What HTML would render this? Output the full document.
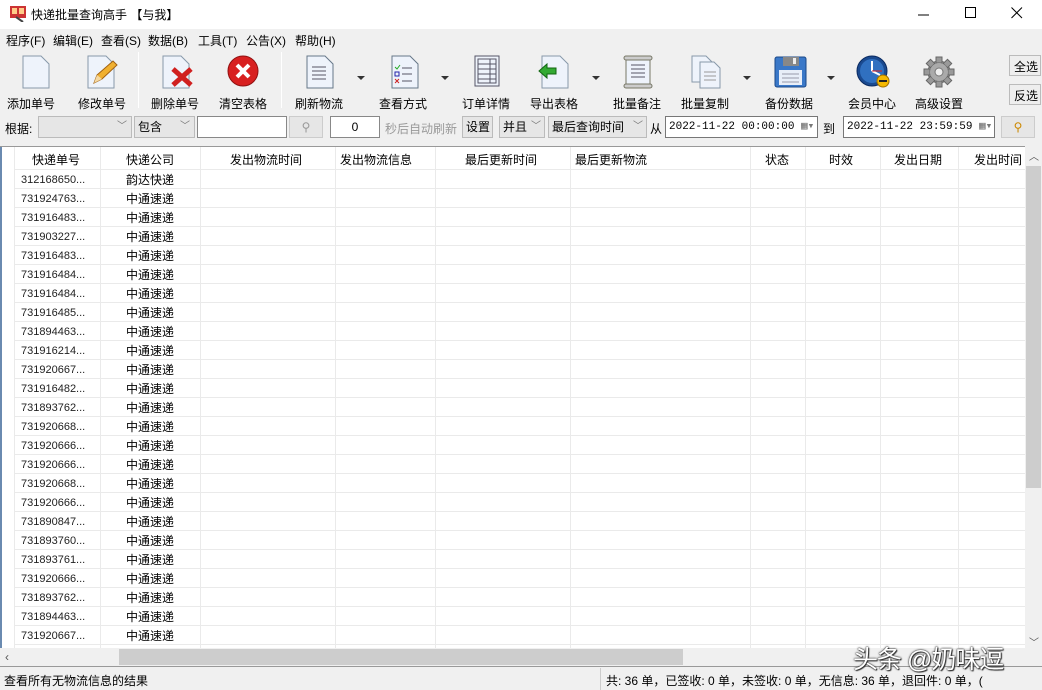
<!DOCTYPE html>
<html><head><meta charset="utf-8"><style>
*{box-sizing:border-box;margin:0;padding:0}
body{width:1042px;height:690px;overflow:hidden;background:#f0f0f0;font-family:"Liberation Sans","Noto Sans CJK SC",sans-serif;font-size:12px;color:#000;position:relative}
.abs{position:absolute}
.title{left:0;top:0;width:1042px;height:29px;background:#fff}
.menu{top:29px;left:0;width:1042px;height:20px;background:#f0f0f0}
.menu span{position:absolute;top:3px;font-size:12px}
.tb{position:absolute;top:95px;font-size:12px;white-space:nowrap}
.ic{position:absolute;top:55px}
.arrow{position:absolute;top:76px;width:0;height:0;border-left:4px solid transparent;border-right:4px solid transparent;border-top:4px solid #333}
.sep{position:absolute;top:52px;width:1px;height:56px;background:#bbb;border-right:1px solid #fff}
.box{position:absolute;top:116px;height:22px;border:1px solid #aaa;background:#fff;font-size:12px;line-height:20px;padding-left:3px}
.grid{left:0;top:146px;width:1025px;height:502px;background:#fff;border-top:1px solid #999}
.row{position:absolute;left:14px;width:1011px;height:19px;border-bottom:1px solid #eaeaea}
.vl{position:absolute;top:147px;height:501px;width:1px;background:#eaeaea}
.c1{position:absolute;left:7px;top:4px;font-size:11px;color:#222}
.c2{position:absolute;left:112px;top:1px;font-size:12px}
.hd{position:absolute;top:151px;font-size:12px}
</style></head><body>
<div class="abs title">
<svg class="abs" style="left:10px;top:6px" width="16" height="16"><rect x="0" y="0" width="16" height="12" fill="#c33"/><rect x="2" y="2" width="5" height="6" fill="#fc8"/><rect x="9" y="2" width="5" height="6" fill="#fc8"/><line x1="6" y1="11" x2="13" y2="16" stroke="#444" stroke-width="2"/></svg>
<span class="abs" style="left:31px;top:6px;font-size:12px">快递批量查询高手 【与我】</span>
<svg class="abs" style="left:918px;top:9px" width="12" height="12"><line x1="0" y1="6" x2="11" y2="6" stroke="#000"/></svg>
<svg class="abs" style="left:965px;top:7px" width="12" height="12"><rect x="0.5" y="0.5" width="10" height="10" fill="none" stroke="#000"/></svg>
<svg class="abs" style="left:1011px;top:7px" width="12" height="12"><path d="M0.5 0.5L11 11M11 0.5L0.5 11" stroke="#000"/></svg>
</div>
<div class="abs menu">
<span style="left:6px">程序(F)</span><span style="left:53px">编辑(E)</span><span style="left:101px">查看(S)</span><span style="left:148px">数据(B)</span><span style="left:198px">工具(T)</span><span style="left:246px">公告(X)</span><span style="left:295px">帮助(H)</span>
</div>
<svg class="ic" style="left:21px" width="30" height="34"><path d="M2 1h18l8 8v24H2z" fill="#eef3fb" stroke="#8899aa"/></svg>
<svg class="ic" style="left:86px" width="32" height="34"><path d="M2 1h18l8 8v24H2z" fill="#eef3fb" stroke="#8899aa"/><path d="M8 28l3-8 16-14 4 4-15 14z" fill="#f0b030" stroke="#a06010"/><path d="M8 28l3-8 5 4z" fill="#f5d8a0"/></svg>
<div class="sep" style="left:138px"></div>
<svg class="ic" style="left:161px" width="34" height="34"><path d="M2 1h18l8 8v24H2z" fill="#eef3fb" stroke="#8899aa"/><path d="M12 14l18 16M30 14L12 30" stroke="#d02020" stroke-width="5"/></svg>
<svg class="ic" style="left:227px" width="34" height="34"><circle cx="16" cy="16" r="15" fill="#d82020" stroke="#901010"/><path d="M10 10l12 12M22 10L10 22" stroke="#fff" stroke-width="4"/></svg>
<div class="sep" style="left:281px"></div>
<svg class="ic" style="left:305px" width="30" height="34"><path d="M2 1h18l8 8v24H2z" fill="#eef3fb" stroke="#667788"/><path d="M7 12h14M7 16h14M7 20h14M7 24h14" stroke="#556"/></svg>
<div class="arrow" style="left:357px"></div>
<svg class="ic" style="left:390px" width="30" height="34"><path d="M2 1h18l8 8v24H2z" fill="#eef3fb" stroke="#667788"/><path d="M5 12l2 2 3-4" stroke="#2a2" fill="none"/><rect x="5" y="17" width="4" height="4" fill="none" stroke="#22a"/><path d="M5 24l4 4M9 24l-4 4" stroke="#c22"/><path d="M12 13h10M12 19h10M12 26h10" stroke="#556"/></svg>
<div class="arrow" style="left:441px"></div>
<svg class="ic" style="left:473px" width="28" height="34"><rect x="2" y="1" width="24" height="30" fill="#eef3fb" stroke="#556"/><rect x="5" y="4" width="18" height="24" fill="none" stroke="#556"/><path d="M5 9h18M5 14h18M5 19h18M5 24h18M17 4v24" stroke="#556"/></svg>
<svg class="ic" style="left:538px" width="32" height="34"><path d="M4 1h18l8 8v24H4z" fill="#eef3fb" stroke="#8899aa"/><path d="M1 16l8-7v4h9v6H9v4z" fill="#3a3" stroke="#161"/></svg>
<div class="arrow" style="left:592px"></div>
<svg class="ic" style="left:622px" width="32" height="34"><rect x="4" y="3" width="24" height="28" fill="#eef3fb" stroke="#776"/><rect x="2" y="1" width="28" height="4" rx="2" fill="#ccc" stroke="#776"/><rect x="2" y="29" width="28" height="4" rx="2" fill="#ccc" stroke="#776"/><path d="M9 10h14M9 14h14M9 18h14M9 22h14" stroke="#556"/></svg>
<svg class="ic" style="left:690px" width="32" height="34"><path d="M2 1h14l6 6v20H2z" fill="#eef3fb" stroke="#8899aa"/><path d="M10 7h14l6 6v20H10z" fill="#eef3fb" stroke="#8899aa"/><path d="M14 17h12M14 21h12M14 25h12" stroke="#999"/></svg>
<div class="arrow" style="left:743px"></div>
<svg class="ic" style="left:774px" width="34" height="34"><rect x="1" y="2" width="31" height="30" rx="2" fill="#3a78c8" stroke="#1a4888"/><rect x="9" y="2" width="16" height="9" fill="#888"/><rect x="19" y="3" width="3" height="6" fill="#eee"/><rect x="5" y="15" width="23" height="15" fill="#e8eef8"/><path d="M8 19h17M8 23h17M8 27h17" stroke="#99a"/></svg>
<div class="arrow" style="left:827px"></div>
<svg class="ic" style="left:856px" width="34" height="34"><circle cx="16" cy="16" r="15" fill="#1a4a90" stroke="#0a2a60"/><circle cx="16" cy="16" r="12" fill="#3070c0"/><path d="M16 16V6M16 16l8 4" stroke="#fff" stroke-width="2"/><line x1="16" y1="16" x2="26" y2="16" stroke="#d22"/><circle cx="27" cy="26" r="6" fill="#f5b800" stroke="#a07000"/><rect x="23" y="25" width="8" height="2" fill="#222"/></svg>
<svg class="ic" style="left:922px" width="34" height="34"><g transform="translate(17 17)"><circle r="11" fill="#999" stroke="#666"/><g fill="#999" stroke="#666"><rect x="-3" y="-15" width="6" height="6"/><rect x="-3" y="9" width="6" height="6"/><rect x="-15" y="-3" width="6" height="6"/><rect x="9" y="-3" width="6" height="6"/><rect x="-3" y="-15" width="6" height="6" transform="rotate(45)"/><rect x="-3" y="-15" width="6" height="6" transform="rotate(135)"/><rect x="-3" y="-15" width="6" height="6" transform="rotate(225)"/><rect x="-3" y="-15" width="6" height="6" transform="rotate(315)"/></g><circle r="9" fill="#aaa"/><circle r="4" fill="#eee" stroke="#777"/></g></svg>
<span class="tb" style="left:7px">添加单号</span><span class="tb" style="left:78px">修改单号</span><span class="tb" style="left:151px">删除单号</span><span class="tb" style="left:219px">清空表格</span><span class="tb" style="left:295px">刷新物流</span><span class="tb" style="left:379px">查看方式</span><span class="tb" style="left:462px">订单详情</span><span class="tb" style="left:530px">导出表格</span><span class="tb" style="left:613px">批量备注</span><span class="tb" style="left:681px">批量复制</span><span class="tb" style="left:765px">备份数据</span><span class="tb" style="left:848px">会员中心</span><span class="tb" style="left:915px">高级设置</span>
<div class="abs" style="left:1009px;top:55px;width:32px;height:21px;border:1px solid #bbb;background:#eee;padding:2px 0 0 4px">全选</div>
<div class="abs" style="left:1009px;top:84px;width:32px;height:21px;border:1px solid #bbb;background:#eee;padding:2px 0 0 4px">反选</div>
<span class="abs" style="left:5px;top:120px">根据:</span>
<div class="box" style="left:38px;width:94px;background:#e6e6e6;border-color:#bbb"><span style="position:absolute;right:4px;color:#777;font-size:10px">﹀</span></div>
<div class="box" style="left:134px;width:61px;background:#e6e6e6;border-color:#bbb">包含<span style="position:absolute;right:4px;color:#777;font-size:10px">﹀</span></div>
<div class="box" style="left:197px;width:90px;border-color:#888"></div>
<div class="box" style="left:289px;width:34px;background:#e6e6e6;border-color:#ccc;color:#999;text-align:center;padding:0">⚲</div>
<div class="box" style="left:330px;width:50px;text-align:center;padding:0;border-color:#888">0</div>
<span class="abs" style="left:385px;top:120px;color:#999">秒后自动刷新</span>
<div class="box" style="left:462px;width:31px;background:#e6e6e6;border-color:#bbb">设置</div>
<div class="box" style="left:499px;width:46px;background:#e6e6e6;border-color:#bbb">并且<span style="position:absolute;right:3px;color:#777;font-size:10px">﹀</span></div>
<div class="box" style="left:548px;width:99px;background:#e6e6e6;border-color:#bbb">最后查询时间<span style="position:absolute;right:3px;color:#777;font-size:10px">﹀</span></div>
<span class="abs" style="left:650px;top:120px">从</span>
<div class="box" style="left:665px;width:153px;font-family:'Liberation Mono',monospace;font-size:11px;border-color:#777">2022-11-22 00:00:00 <span style="color:#777">▦▾</span></div>
<span class="abs" style="left:823px;top:120px">到</span>
<div class="box" style="left:843px;width:152px;font-family:'Liberation Mono',monospace;font-size:11px;border-color:#777">2022-11-22 23:59:59 <span style="color:#777">▦▾</span></div>
<div class="box" style="left:1001px;width:34px;background:#e6e6e6;border-color:#ccc;text-align:center;padding:0;color:#c80">⚲</div>
<div class="abs grid"></div>
<div class="abs" style="left:0;top:147px;width:14px;height:501px;background:#fff"></div>
<div class="abs" style="left:0;top:147px;width:2px;height:501px;background:#6a8ab0"></div>
<div class="vl" style="left:14px"></div><div class="vl" style="left:100px"></div><div class="vl" style="left:200px"></div><div class="vl" style="left:335px"></div><div class="vl" style="left:435px"></div><div class="vl" style="left:570px"></div><div class="vl" style="left:750px"></div><div class="vl" style="left:805px"></div><div class="vl" style="left:880px"></div><div class="vl" style="left:958px"></div>
<span class="hd" style="left:32px">快递单号</span><span class="hd" style="left:126px">快递公司</span><span class="hd" style="left:230px">发出物流时间</span><span class="hd" style="left:340px">发出物流信息</span><span class="hd" style="left:465px">最后更新时间</span><span class="hd" style="left:575px">最后更新物流</span><span class="hd" style="left:765px">状态</span><span class="hd" style="left:829px">时效</span><span class="hd" style="left:894px">发出日期</span><span class="hd" style="left:974px">发出时间</span>
<div class="row" style="top:151px;height:19px"></div>
<div id="rows"></div>
<script>
var n=["312168650","731924763","731916483","731903227","731916483","731916484","731916484","731916485","731894463","731916214","731920667","731916482","731893762","731920668","731920666","731920666","731920668","731920666","731890847","731893760","731893761","731920666","731893762","731894463","731920667"];
var h="";for(var i=0;i<n.length;i++){h+='<div class="row" style="top:'+(170+i*19)+'px"><span class="c1">'+n[i]+'...</span><span class="c2">'+(i==0?"韵达快递":"中通速递")+'</span></div>';}
document.getElementById("rows").innerHTML=h;
</script>
<div class="abs" style="left:1025px;top:147px;width:17px;height:501px;background:#f0f0f0"></div>
<span class="abs" style="left:1029px;top:148px;font-size:10px;color:#555">︿</span>
<div class="abs" style="left:1026px;top:166px;width:15px;height:322px;background:#cdcdcd"></div>
<span class="abs" style="left:1029px;top:634px;font-size:10px;color:#555">﹀</span>
<div class="abs" style="left:0;top:648px;width:1042px;height:18px;background:#f0f0f0"></div>
<span class="abs" style="left:5px;top:650px;font-size:12px;color:#555">‹</span>
<div class="abs" style="left:119px;top:649px;width:564px;height:16px;background:#cdcdcd"></div>
<div class="abs" style="left:0;top:666px;width:1042px;height:1px;background:#999"></div>
<span class="abs" style="left:853px;top:640px;font-size:25px;letter-spacing:-1px;color:#fff;text-shadow:0 0 2px #222,0 0 1px #000,1px 1px 1px #333">头条 @奶味逗</span>
<span class="abs" style="left:4px;top:672px">查看所有无物流信息的结果</span>
<div class="abs" style="left:600px;top:668px;width:1px;height:22px;background:#ccc"></div>
<span class="abs" style="left:606px;top:672px;white-space:nowrap">共: 36 单，已签收: 0 单，未签收: 0 单，无信息: 36 单，退回件: 0 单，(</span>
</body></html>
